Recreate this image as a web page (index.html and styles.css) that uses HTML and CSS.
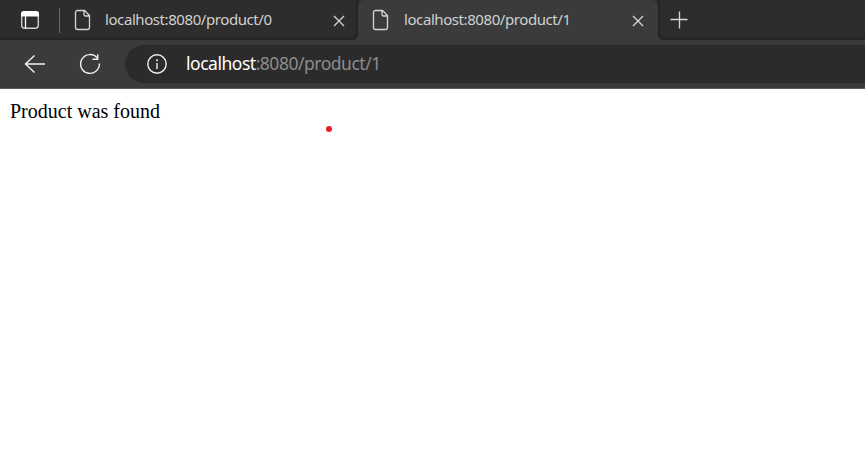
FILE: index.html
```
<!DOCTYPE html>
<html lang="en">
<head>
<meta charset="utf-8">
<title>localhost:8080/product/1</title>
<link rel="stylesheet" href="styles.css">
</head>
<body>
<header class="browser">
  <div class="tabs">
    <div class="strip strip-left">
      <svg class="workspace" width="20" height="20" viewBox="0 0 20 20"><rect x="1.7" y="1.7" width="16.6" height="16.6" rx="3" fill="none" stroke="#cfcfcf" stroke-width="1.4"/><path d="M1 6.5V4a3 3 0 0 1 3-3h12a3 3 0 0 1 3 3v2.5z" fill="#fff" stroke="none"/><path d="M5.5 6v12" stroke="#fff" stroke-width="1.3"/></svg>
      <span class="divider"></span>
      <svg class="page" width="18" height="22" viewBox="0 0 18 22"><path d="M3.5 1.5h7l5 5v11.8a2.2 2.2 0 0 1-2.2 2.2H3.7a2.2 2.2 0 0 1-2.2-2.2V3.5a2 2 0 0 1 2-2zM10 1.7v3.8a1.5 1.5 0 0 0 1.5 1.5h4"/></svg>
      <span class="title">localhost:8080/product/0</span>
      <svg class="close" width="12" height="12" viewBox="0 0 12 12"><path d="M1 1l10 10M11 1L1 11"/></svg>
    </div>
    <div class="active">
      <svg class="page" width="18" height="22" viewBox="0 0 18 22"><path d="M3.5 1.5h7l5 5v11.8a2.2 2.2 0 0 1-2.2 2.2H3.7a2.2 2.2 0 0 1-2.2-2.2V3.5a2 2 0 0 1 2-2zM10 1.7v3.8a1.5 1.5 0 0 0 1.5 1.5h4"/></svg>
      <span class="title">localhost:8080/product/1</span>
      <svg class="close" width="12" height="12" viewBox="0 0 12 12"><path d="M1 1l10 10M11 1L1 11"/></svg>
    </div>
    <div class="strip strip-right">
      <svg class="plus" width="18" height="18" viewBox="0 0 18 18"><path d="M9.5 0.5v17M0.5 8.5h17"/></svg>
    </div>
  </div>
  <div class="toolbar">
    <svg class="back" width="22" height="20" viewBox="0 0 22 20"><path d="M21 10H1.5M10.5 1.5L1.5 10l9 8.5"/></svg>
    <svg class="reload" width="22" height="22" viewBox="0 0 22 22"><path d="M20.4 10.5a9.4 9.4 0 1 1-2.2-5.6M18.7 1.2v5h-5.2"/></svg>
    <div class="address">
      <svg class="info" width="20" height="20" viewBox="0 0 20 20"><circle cx="10" cy="10" r="9.2"/><path d="M10 9v6"/><circle class="dot" cx="10" cy="6.2" r="1"/></svg>
      <span class="url"><span class="host">localhost</span>:8080/product/1</span>
    </div>
  </div>
</header>
<main class="content">
  <p class="message">Product was found</p>
  <span class="pointer"></span>
</main>
</body>
</html>
```
FILE: styles.css
```
* { box-sizing: border-box; }
body { margin: 0; background: #fff; overflow: hidden; }
svg { display: block; flex: none; fill: none; stroke: #d6d6d6; stroke-width: 1.3; }
.browser {
  height: 89px;
  background: #3b3b3b;
  border-bottom: 1px solid #5c5c5c;
  font-family: "Noto Sans", sans-serif;
}
.tabs {
  display: flex;
  height: 40px;
  background: linear-gradient(#2d2d2d 0 20px, #3b3b3b 20px);
}
.strip {
  display: flex;
  align-items: center;
  background: #2d2d2d;
}
.strip-left {
  width: 358px;
  padding-left: 20px;
  border-bottom-right-radius: 6px;
  box-shadow: inset -2px -2px 3px -1px #202020;
}
.strip-right {
  flex: 1;
  padding-left: 12px;
  border-bottom-left-radius: 6px;
  box-shadow: inset 2px -2px 3px -1px #202020;
}
.active {
  display: flex;
  align-items: center;
  width: 300px;
  padding-left: 15px;
  background: #3b3b3b;
  border-radius: 6px 6px 0 0;
}
.divider { width: 1px; height: 25px; margin: 0 15px 0 19px; background: #6b6b6b; }
.page { margin-right: 13px; margin-left: -1px; }
.active .title { margin-left: 1px; }
.title {
  width: 228px;
  font-size: 15px;
  letter-spacing: -0.42px;
  line-height: 20px;
  margin-top: -2px;
  color: #d0d0d0;
  white-space: nowrap;
}
.close { margin-top: 1px; }
.toolbar { display: flex; align-items: center; height: 48px; padding-left: 24px; }
.back, .reload, .info { stroke: #f0f0f0; stroke-width: 1.4; }
.back { margin-top: -1px; }
.reload { margin-left: 33px; }
.address {
  display: flex;
  align-items: center;
  flex: 1;
  height: 38px;
  margin-left: 24px;
  padding-left: 22px;
  background: #2b2b2b;
  border-radius: 19px 0 0 19px;
}
.dot { fill: #f0f0f0; stroke: none; }
.url {
  margin-top: -2px;
  margin-left: 19px;
  font-size: 17.5px;
  letter-spacing: -0.48px;
  line-height: 24px;
  color: #8c8c8c;
  white-space: nowrap;
}
.host { color: #fff; }
.content { position: relative; height: 366px; padding: 10px; }
.message { margin: 0; font: 20px/24px "Liberation Serif", serif; color: #000; }
.pointer {
  position: absolute;
  left: 326px;
  top: 37px;
  width: 6px;
  height: 6px;
  border-radius: 50%;
  background: #ed1c24;
}
```
